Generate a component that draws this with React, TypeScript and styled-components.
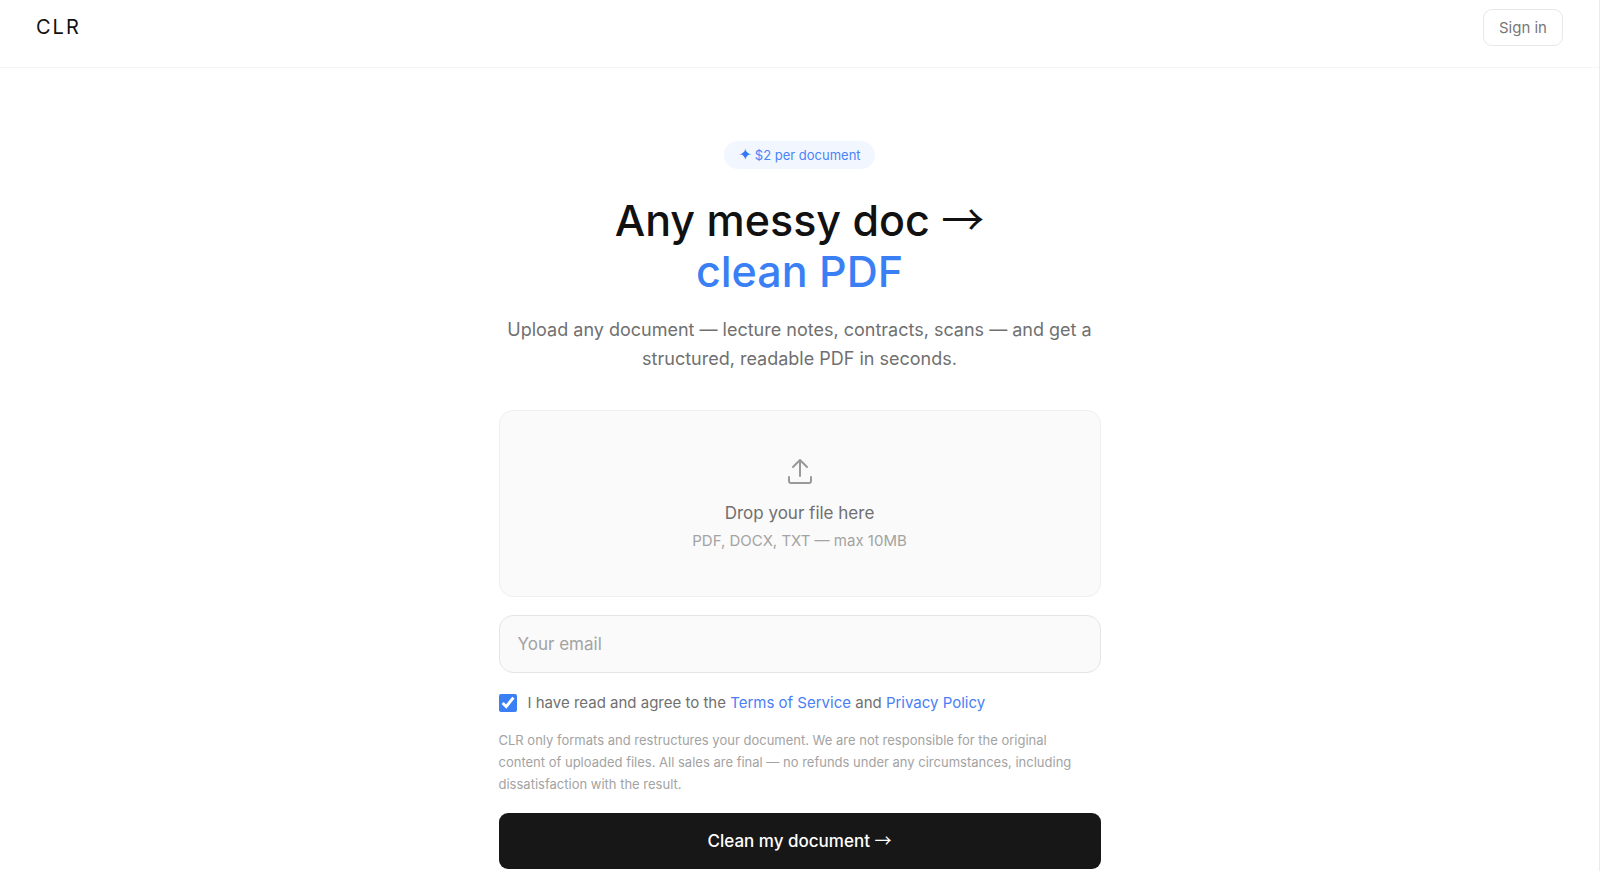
import React from "react";
import styled, { createGlobalStyle } from "styled-components";

const Global = createGlobalStyle`
  *, *::before, *::after { box-sizing: border-box; }
  body { margin: 0; background: #fff; color: #111; font-family: Inter, "Liberation Sans", sans-serif; }
  button, input { font-family: inherit; }
`;
const Page = styled.div`
  min-height: 100vh; border-right: 1px solid #ebebeb;
`;
const Header = styled.header`
  display: flex; justify-content: space-between; align-items: center;
  height: 68px; padding: 0 36px 13px; border-bottom: 1px solid #f5f5f5;
`;
const Logo = styled.span`font-size: 20px; line-height: 26px; letter-spacing: 2px;`;
const SignIn = styled.button`
  height: 37px; padding: 0 15px; border: 1px solid #e8e8e8; border-radius: 9px;
  background: #fff; color: #777; font-size: 15px;
`;
const Main = styled.main`
  display: flex; flex-direction: column; align-items: center;
  width: 100%; max-width: 602px; margin: 0 auto; padding: 73px 0 0;
`;
const Badge = styled.div`
  display: flex; align-items: center; gap: 3px;
  height: 28px; padding: 0 14px; border-radius: 14px;
  background: #f2f6ff; color: #4a83f7; font-size: 13px;
`;
const Star = styled.span`
  font-family: "DejaVu Sans", sans-serif; font-size: 16px; line-height: 16px; color: #2f78f5;
`;
const Title = styled.h1`
  margin: 26px 0 0; text-align: center; font-size: 43px; line-height: 51px; font-weight: 500;
`;
const Arrow = styled.span`font-family: "Noto Sans CJK JP", sans-serif; font-weight: 400; line-height: 1;`;
const Accent = styled.span`display: block; color: #3b7ff5;`;
const Lead = styled.p`
  margin: 18px 0 0; text-align: center; font-size: 18px; line-height: 29px; color: #707070;
`;
const Drop = styled.label`
  display: flex; flex-direction: column; align-items: center; width: 100%; height: 187px;
  margin-top: 37px; padding-top: 44px; border: 1px solid #efefef; border-radius: 14px; background: #fafafa;
`;
const HiddenFile = styled.input`
  position: absolute; width: 1px; height: 1px; opacity: 0;
`;
const DropTitle = styled.span`margin-top: 12px; font-size: 17px; line-height: 28px; color: #707070;`;
const DropHint = styled.span`font-size: 15px; line-height: 28px; color: #a3a3a3;`;
const Email = styled.input`
  width: 100%; height: 58px; margin-top: 18px; padding: 0 18px; border: 1px solid #e5e5e5;
  border-radius: 14px; background: #fafafa; font-size: 17px;
  &::placeholder { color: #a3a3a3; opacity: 1; }
`;
const Agree = styled.label`
  display: flex; align-items: center; gap: 11px; align-self: flex-start; margin-top: 18px;
  font-size: 15px; line-height: 24px; color: #707070;
`;
const Check = styled.input`width: 18px; height: 18px; margin: 0; accent-color: #3b7ff5;`;
const Link = styled.a`color: #4a80f5; text-decoration: none;`;
const Note = styled.p`
  align-self: flex-start; margin: 14px 0 0; padding-right: 8px;
  font-size: 13px; line-height: 22px; color: #a3a3a3;
`;
const Submit = styled.button`
  width: 100%; height: 56px; margin-top: 18px; border: 0; border-radius: 9px;
  background: #171717; color: #fff; font-size: 17px; font-weight: 500;
`;

export default function App() {
  return (
    <Page>
      <Global />
      <Header><Logo>CLR</Logo><SignIn type="button">Sign in</SignIn></Header>
      <Main>
        <Badge><Star>✦</Star>$2 per document</Badge>
        <Title>Any messy doc <Arrow>→</Arrow><Accent>clean PDF</Accent></Title>
        <Lead>Upload any document — lecture notes, contracts, scans — and get a structured, readable PDF in seconds.</Lead>
        <Drop>
          <HiddenFile type="file" />
          <svg width="32" height="32" viewBox="0 0 32 32" fill="none" stroke="#999" strokeWidth="2" strokeLinecap="round" strokeLinejoin="round" aria-hidden="true">
            <path d="M16 21V5M9 12l7-7 7 7M5 22v4a2 2 0 0 0 2 2h18a2 2 0 0 0 2-2v-4" />
          </svg>
          <DropTitle>Drop your file here</DropTitle>
          <DropHint>PDF, DOCX, TXT — max 10MB</DropHint>
        </Drop>
        <Email type="email" placeholder="Your email" aria-label="Your email" />
        <Agree>
          <Check type="checkbox" defaultChecked />
          <span>I have read and agree to the <Link href="#terms">Terms of Service</Link> and <Link href="#privacy">Privacy Policy</Link></span>
        </Agree>
        <Note>CLR only formats and restructures your document. We are not responsible for the original content of uploaded files. All sales are final — no refunds under any circumstances, including dissatisfaction with the result.</Note>
        <Submit type="button">Clean my document <Arrow>→</Arrow></Submit>
      </Main>
    </Page>
  );
}
